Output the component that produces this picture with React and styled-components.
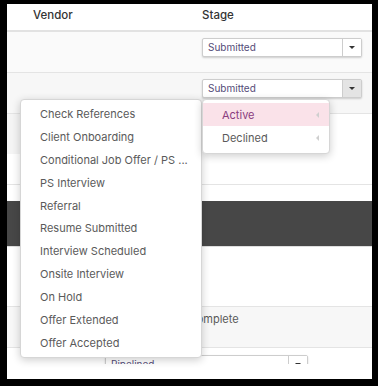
import React from "react";
import styled, { createGlobalStyle } from "styled-components";

const Global = createGlobalStyle`
  html, body { margin: 0; padding: 0; background: #000; }
  body { font-family: Inter, "Noto Sans", sans-serif; }
  #root { height: 386px; overflow: hidden; }
  * { box-sizing: border-box; }
`;

const Screen = styled.div`
  position: relative;
  margin: 4px 6px 0 7px;
  width: 365px;
  height: 375px;
  background: #fff;
`;

const Table = styled.div`
  height: 360px;
  overflow: hidden;
  display: flex;
  flex-direction: column;
`;

const Row = styled.div`
  display: grid;
  grid-template-columns: 195px 1fr;
  flex: none;
  height: ${(p) => p.$h}px;
  background: ${(p) => p.$bg || "#fff"};
  border-bottom: ${(p) => (p.$line ? `${p.$line}px solid ${p.$lineColor || "#e4e4e4"}` : "none")};
`;

const HeadCell = styled.div`
  padding: 4px 0 0 ${(p) => p.$pl || 0}px;
  font-size: 11.5px;
  line-height: 14px;
  font-weight: 500;
  color: #333;
`;

const Cell = styled.div`
  padding: ${(p) => p.$pt || 0}px 0 0 ${(p) => p.$pl || 0}px;
  background: ${(p) => p.$bg || "transparent"};
`;

const CellText = styled.div`
  font-size: 11px;
  line-height: 14px;
  color: #5a5a5a;
  white-space: nowrap;
  padding-left: ${(p) => p.$pl || 0}px;
`;

const DarkBand = styled.div`
  flex: none;
  height: 46px;
  background: #474747;
  border-bottom: 1px solid #dedede;
`;

const Spacer = styled.div`
  flex: none;
  height: ${(p) => p.$h}px;
`;

const SelectBox = styled.div`
  display: flex;
  width: ${(p) => p.$w}px;
  height: 19px;
  margin-left: ${(p) => p.$ml || 0}px;
  border: 1px solid #cdcdcd;
  border-radius: 2px;
  background: #fff;
  box-shadow: 0 1px 2px rgba(0, 0, 0, 0.18);
`;

const SelectValue = styled.div`
  flex: 1;
  padding-left: 5px;
  font-size: 10px;
  line-height: 17px;
  color: #544c78;
  white-space: nowrap;
  overflow: hidden;
`;

const SelectButton = styled.div`
  width: 19px;
  display: flex;
  align-items: center;
  justify-content: center;
  border-left: 1px solid #cdcdcd;
  background: ${(p) => (p.$active ? "#e4e4e4" : "#fff")};
`;

const Caret = styled.span`
  width: 0;
  height: 0;
  border-left: 3px solid transparent;
  border-right: 3px solid transparent;
  border-top: 3px solid #333;
`;

const Menu = styled.div`
  position: absolute;
  left: ${(p) => p.$left}px;
  top: ${(p) => p.$top}px;
  width: ${(p) => p.$w}px;
  padding: ${(p) => p.$pad};
  background: #fff;
  border: 1px solid #d6d6d6;
  border-radius: 4px;
  box-shadow: 0 2px 8px rgba(0, 0, 0, 0.2);
  z-index: 10;
`;

const MenuItem = styled.div`
  display: flex;
  align-items: center;
  justify-content: space-between;
  height: ${(p) => p.$h}px;
  padding: 0 10px 0 19px;
  font-size: 11px;
  white-space: nowrap;
  color: ${(p) => (p.$selected ? "#8a3d7e" : "#5a5a5a")};
  background: ${(p) => (p.$selected ? "#fae2e9" : "transparent")};
`;

const SubArrow = styled.span`
  width: 0;
  height: 0;
  border-top: 3px solid transparent;
  border-bottom: 3px solid transparent;
  border-right: 3px solid #cfcfcf;
`;

const Select = ({ value, w, ml, active }) => (
  <SelectBox $w={w} $ml={ml}>
    <SelectValue>{value}</SelectValue>
    <SelectButton $active={active}>
      <Caret />
    </SelectButton>
  </SelectBox>
);

const stages = [
  "Check References",
  "Client Onboarding",
  "Conditional Job Offer / PS ...",
  "PS Interview",
  "Referral",
  "Resume Submitted",
  "Interview Scheduled",
  "Onsite Interview",
  "On Hold",
  "Offer Extended",
  "Offer Accepted",
];

export default function App() {
  return (
    <>
      <Global />
      <Screen>
        <Table>
          <Row $h={28} $line={2} $lineColor="#e2e2e2">
            <HeadCell $pl={26}>Vendor</HeadCell>
            <HeadCell>Stage</HeadCell>
          </Row>
          <Row $h={41} $line={1} $bg="#fafafa">
            <Cell />
            <Cell $pt={6}>
              <Select value="Submitted" w={160} />
            </Cell>
          </Row>
          <Row $h={41} $line={1} $bg="#f7f7f7">
            <Cell />
            <Cell $pt={6}>
              <Select value="Submitted" w={160} active />
            </Cell>
          </Row>
          <Row $h={40}>
            <Cell $bg="#f4f4f4" />
            <Cell />
          </Row>
          <Row $h={31} $line={1}>
            <Cell />
            <Cell />
          </Row>
          <Spacer $h={16} />
          <DarkBand />
          <Row $h={60} $line={1}>
            <Cell />
            <Cell />
          </Row>
          <Row $h={41} $line={1} $bg="#f7f7f7">
            <Cell $pt={5}>
              <CellText $pl={174}>Incomplete</CellText>
            </Cell>
            <Cell />
          </Row>
          <Row $h={40}>
            <Cell $pt={7}>
              <Select value="Pipelined" w={203} ml={98} />
            </Cell>
            <Cell />
          </Row>
        </Table>

        <Menu $left={13} $top={95} $w={182} $pad="2.5px 0 3px">
          {stages.map((s) => (
            <MenuItem key={s} $h={22.9}>
              {s}
            </MenuItem>
          ))}
        </Menu>

        <Menu $left={195} $top={95} $w={128} $pad="3px 0 4px">
          <MenuItem $h={23} $selected>
            Active
            <SubArrow />
          </MenuItem>
          <MenuItem $h={23}>
            Declined
            <SubArrow />
          </MenuItem>
        </Menu>
      </Screen>
    </>
  );
}
